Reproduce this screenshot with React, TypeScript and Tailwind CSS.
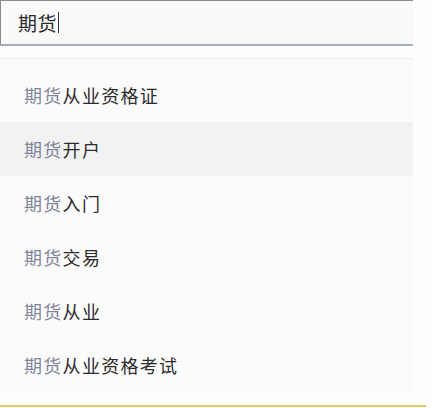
const items: [string, string][] = [
  ["期货", "从业资格证"],
  ["期货", "开户"],
  ["期货", "入门"],
  ["期货", "交易"],
  ["期货", "从业"],
  ["期货", "从业资格考试"],
];

export default function App() {
  return (
    <div
      className="w-[432px] h-[408px] bg-[#fefefe] flex flex-col overflow-hidden"
      style={{ fontFamily: '"Noto Sans CJK SC", "Noto Sans", sans-serif' }}
    >
      <div className="w-[413px] flex flex-col">
        {/* search input */}
        <div className="h-[46px] bg-[#f9f9fa] border-t border-l border-[#8c8c8c] border-b-2 border-b-[#a3adbd] flex items-center pl-[17px]">
          <span className="text-[19px] text-[#2a2a2a] leading-none tracking-[0.5px]">期货</span>
          <span className="w-px h-[21px] bg-[#333] ml-px" />
        </div>
        <div className="h-[12px]" />
        {/* suggestions */}
        <div className="border-t border-[#ececee] bg-[#fbfbfc] pt-[9px] flex flex-col">
          {items.map(([prefix, rest], i) => (
            <div
              key={i}
              className={
                "h-[54px] flex items-center pl-[24px] text-[18px] tracking-[1.3px] " +
                (i === 1 ? "bg-[#f2f2f3]" : "")
              }
            >
              <span className="text-[#7f8698]">{prefix}</span>
              <span className="text-[#2b2b2b]">{rest}</span>
            </div>
          ))}
        </div>
      </div>
      <div className="flex-1" />
      <div className="h-[2px] w-[426px] bg-[#e4c766] mb-px" />
    </div>
  );
}
